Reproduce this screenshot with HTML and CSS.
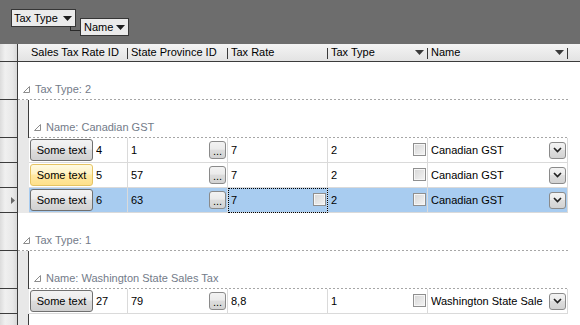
FILE: index.html
```html
<!DOCTYPE html>
<html>
<head>
<meta charset="utf-8">
<title>Grid</title>
<link rel="stylesheet" href="styles.css">
</head>
<body>
<div class="grid">
  <div class="panel">
    <div class="gp-btn gp-tax"><span>Tax Type</span><svg class="dd" width="9" height="5" viewBox="0 0 9 5"><polygon points="0,0 9,0 4.5,5" fill="#1e1e1e"/></svg></div>
    <div class="gp-link"></div>
    <div class="gp-btn gp-name"><span>Name</span><svg class="dd" width="9" height="5" viewBox="0 0 9 5"><polygon points="0,0 9,0 4.5,5" fill="#1e1e1e"/></svg></div>
  </div>

  <div class="hdr">
    <div class="corner"></div>
    <div class="hind"></div>
    <div class="hc c1"><span class="t">Sales Tax Rate ID</span><span class="sep"></span></div>
    <div class="hc c2"><span class="t">State Province ID</span><span class="sep"></span></div>
    <div class="hc c3"><span class="t">Tax Rate</span><span class="sep"></span></div>
    <div class="hc c4"><span class="t">Tax Type</span><svg class="hdd" width="9" height="5" viewBox="0 0 9 5"><polygon points="0,0 9,0 4.5,5" fill="#3a3a3a"/></svg><span class="sep"></span></div>
    <div class="hc c5"><span class="t">Name</span><svg class="hdd" width="9" height="5" viewBox="0 0 9 5"><polygon points="0,0 9,0 4.5,5" fill="#3a3a3a"/></svg><span class="sep"></span></div>
  </div>

  <div class="row grp">
    <div class="rh"></div>
    <div class="gc g1"><div class="glabel"><svg class="gtri" width="7" height="7" viewBox="0 0 7 7"><polygon points="0.5,6.5 6.5,6.5 6.5,0.5" fill="none" stroke="#8c8c8c"/></svg><span>Tax Type: 2</span></div></div>
  </div>
  <div class="row grp">
    <div class="rh"></div>
    <div class="ind line"></div>
    <div class="gc g2"><div class="glabel"><svg class="gtri" width="7" height="7" viewBox="0 0 7 7"><polygon points="0.5,6.5 6.5,6.5 6.5,0.5" fill="none" stroke="#8c8c8c"/></svg><span>Name: Canadian GST</span></div></div>
  </div>

  <div class="row data">
    <div class="rh"></div>
    <div class="ind"></div>
    <div class="cell c1"><span class="btn">Some text</span><span class="v">4</span></div>
    <div class="cell c2"><span class="v">1</span><span class="ell">...</span></div>
    <div class="cell c3"><span class="v">7</span></div>
    <div class="cell c4"><span class="v">2</span><span class="chk"></span></div>
    <div class="cell c5"><span class="v">Canadian GST</span><span class="combo"><svg width="9" height="6" viewBox="0 0 9 6"><polyline points="1,1 4.5,4.5 8,1" fill="none" stroke="#222" stroke-width="1.7"/></svg></span></div>
  </div>
  <div class="row data">
    <div class="rh"></div>
    <div class="ind"></div>
    <div class="cell c1"><span class="btn hot">Some text</span><span class="v">5</span></div>
    <div class="cell c2"><span class="v">57</span><span class="ell">...</span></div>
    <div class="cell c3"><span class="v">7</span></div>
    <div class="cell c4"><span class="v">2</span><span class="chk"></span></div>
    <div class="cell c5"><span class="v">Canadian GST</span><span class="combo"><svg width="9" height="6" viewBox="0 0 9 6"><polyline points="1,1 4.5,4.5 8,1" fill="none" stroke="#222" stroke-width="1.7"/></svg></span></div>
  </div>
  <div class="row data sel">
    <div class="rh cur"><svg width="4" height="7" viewBox="0 0 4 7"><polygon points="0,0 4,3.5 0,7" fill="#6a6a6a"/></svg></div>
    <div class="ind"></div>
    <div class="cell c1"><span class="btn">Some text</span><span class="v">6</span></div>
    <div class="cell c2"><span class="v">63</span><span class="ell">...</span></div>
    <div class="cell c3 focus"><span class="v">7</span><span class="chk"></span></div>
    <div class="cell c4"><span class="v">2</span><span class="chk"></span></div>
    <div class="cell c5"><span class="v">Canadian GST</span><span class="combo"><svg width="9" height="6" viewBox="0 0 9 6"><polyline points="1,1 4.5,4.5 8,1" fill="none" stroke="#222" stroke-width="1.7"/></svg></span></div>
  </div>

  <div class="row grp">
    <div class="rh"></div>
    <div class="gc g1"><div class="glabel"><svg class="gtri" width="7" height="7" viewBox="0 0 7 7"><polygon points="0.5,6.5 6.5,6.5 6.5,0.5" fill="none" stroke="#8c8c8c"/></svg><span>Tax Type: 1</span></div></div>
  </div>
  <div class="row grp">
    <div class="rh"></div>
    <div class="ind line"></div>
    <div class="gc g2"><div class="glabel"><svg class="gtri" width="7" height="7" viewBox="0 0 7 7"><polygon points="0.5,6.5 6.5,6.5 6.5,0.5" fill="none" stroke="#8c8c8c"/></svg><span>Name: Washington State Sales Tax</span></div></div>
  </div>
  <div class="row data">
    <div class="rh"></div>
    <div class="ind"></div>
    <div class="cell c1"><span class="btn">Some text</span><span class="v">27</span></div>
    <div class="cell c2"><span class="v">79</span><span class="ell">...</span></div>
    <div class="cell c3"><span class="v">8,8</span></div>
    <div class="cell c4"><span class="v">1</span><span class="chk"></span></div>
    <div class="cell c5"><span class="v">Washington State Sale</span><span class="combo"><svg width="9" height="6" viewBox="0 0 9 6"><polyline points="1,1 4.5,4.5 8,1" fill="none" stroke="#222" stroke-width="1.7"/></svg></span></div>
  </div>

  <div class="row fill">
    <div class="rh"></div>
    <div class="ind line"></div>
  </div>
</div>
</body>
</html>
```

FILE: styles.css
```css
html, body {
  margin: 0;
  padding: 0;
  background: #ffffff;
}
body {
  font-family: "Liberation Sans", Arial, sans-serif;
  font-size: 11px;
  line-height: 13px;
  color: #000;
  width: 580px;
  height: 325px;
  overflow: hidden;
}
.grid {
  display: flex;
  flex-direction: column;
  height: 325px;
  width: 580px;
}

/* group-by panel */
.panel {
  flex: 0 0 44px;
  background: #6d6d6d;
  display: flex;
  align-items: flex-start;
  padding-left: 11px;
  box-sizing: border-box;
}
.gp-btn {
  display: flex;
  align-items: center;
  height: 18px;
  box-sizing: border-box;
  border: 1px solid #363636;
  background: #ebebeb;
}
.gp-btn .dd { margin-left: auto; margin-right: 3px; }
.gp-tax { width: 65px; margin-top: 9px; padding-left: 2px; }
.gp-name { width: 49px; margin-top: 18px; padding-left: 3px; }
.gp-link {
  width: 10px;
  height: 5px;
  margin-top: 26px;
  margin-left: -6px;
  box-sizing: border-box;
  border-left: 1px solid #2a2a2a;
  border-bottom: 1px solid #2a2a2a;
}

/* header */
.hdr {
  flex: 0 0 18px;
  display: flex;
  box-sizing: border-box;
  border-bottom: 1px solid #3c3c3c;
  background: linear-gradient(#f4f4f4, #e3e3e3);
}
.corner {
  flex: 0 0 18px;
  box-sizing: border-box;
  border-right: 1px solid #3c3c3c;
  background: linear-gradient(to right, #dcdcdc, #f0f0f0 30%, #e8e8e8 75%, #d8d8d8);
}
.hind { flex: 0 0 11px; }
.hc {
  display: flex;
  align-items: center;
  box-sizing: border-box;
}
.hc .t { flex: 1 1 auto; padding-left: 3px; white-space: nowrap; overflow: hidden; }
.hc.c1 .t { padding-left: 2px; }
.hc .sep {
  flex: 0 0 1px;
  height: 11px;
  align-self: flex-end;
  margin-bottom: 2px;
  background: #3a3a3a;
}
.hc .hdd { margin-right: 3px; margin-top: -1px; }

.c1 { flex: 0 0 99px; }
.c2 { flex: 0 0 100px; }
.c3 { flex: 0 0 100px; }
.c4 { flex: 0 0 100px; }
.c5 { flex: 0 0 140px; }

/* rows */
.row { display: flex; }
.row.grp { flex: 0 0 38px; }
.row.data { flex: 0 0 25px; }
.row.fill { flex: 1 1 auto; }

.rh {
  flex: 0 0 18px;
  box-sizing: border-box;
  border-right: 1px solid #3c3c3c;
  border-bottom: 1px solid #3c3c3c;
  background: linear-gradient(to right, #dcdcdc, #f0f0f0 30%, #e8e8e8 75%, #d8d8d8);
  display: flex;
  align-items: center;
  justify-content: flex-end;
  padding-right: 2px;
}
.row.fill .rh { border-bottom: none; }

.ind {
  flex: 0 0 11px;
  box-sizing: border-box;
  background: #e8e8e8;
}
.ind.line { border-right: 1px solid #3c3c3c; }

/* group rows */
.gc {
  display: flex;
  align-items: flex-end;
  box-sizing: border-box;
  padding-bottom: 4px;
  background-image: linear-gradient(to right, #a6a6a6 50%, transparent 50%);
  background-size: 4px 1px;
  background-repeat: repeat-x;
  background-position: left bottom;
}
.gc.g1 { flex: 0 0 550px; }
.gc.g2 { flex: 0 0 539px; }
.glabel {
  display: flex;
  align-items: center;
  height: 13px;
  color: #737b89;
  white-space: nowrap;
}
.gtri { margin-left: 5px; margin-right: 5px; }

/* data cells */
.cell {
  display: flex;
  align-items: center;
  box-sizing: border-box;
  height: 25px;
  border-right: 1px solid #dadada;
  border-bottom: 1px solid #dadada;
  padding-left: 3px;
  white-space: nowrap;
}
.cell .v { flex: 1 1 auto; min-width: 0; overflow: hidden; }
.cell.c1 { padding-left: 1px; }
.cell.c1 .v { margin-left: 3px; }
.row.sel .cell { background: #a8ccf0; }
.cell.focus {
  outline: 1px dotted #000;
  outline-offset: -1px;
}

.btn {
  flex: 0 0 63px;
  height: 22px;
  box-sizing: border-box;
  border: 1px solid #707070;
  border-radius: 3px;
  background: linear-gradient(#f3f3f3, #ececec 45%, #dddddd 50%, #d0d0d0);
  display: flex;
  align-items: center;
  justify-content: center;
}
.btn.hot {
  border-color: #e6c462;
  background: linear-gradient(#fffbe3, #fff2c2 45%, #ffe9a3 50%, #ffe08a);
}

.ell {
  flex: 0 0 17px;
  height: 18px;
  margin-right: 1px;
  box-sizing: border-box;
  border: 1px solid #8a8a8a;
  border-radius: 3px;
  background: linear-gradient(#f3f3f3, #ebebeb 45%, #dddddd 50%, #d2d2d2);
  display: flex;
  align-items: flex-end;
  justify-content: center;
  line-height: 12px;
  padding-bottom: 1px;
}

.chk {
  flex: 0 0 13px;
  height: 13px;
  margin-right: 1px;
  box-sizing: border-box;
  border: 1px solid #8f8f8f;
  box-shadow: inset 0 0 0 1px #f6f6f6;
  background: linear-gradient(135deg, #d6d6d6, #f4f4f4);
  margin-top: -2px;
}

.combo {
  flex: 0 0 17px;
  height: 17px;
  margin-left: 5px;
  margin-right: 1px;
  box-sizing: border-box;
  border: 1px solid #8a8a8a;
  border-radius: 3px;
  background: linear-gradient(#f3f3f3, #ebebeb 45%, #dddddd 50%, #d2d2d2);
  display: flex;
  align-items: center;
  justify-content: center;
}
```
